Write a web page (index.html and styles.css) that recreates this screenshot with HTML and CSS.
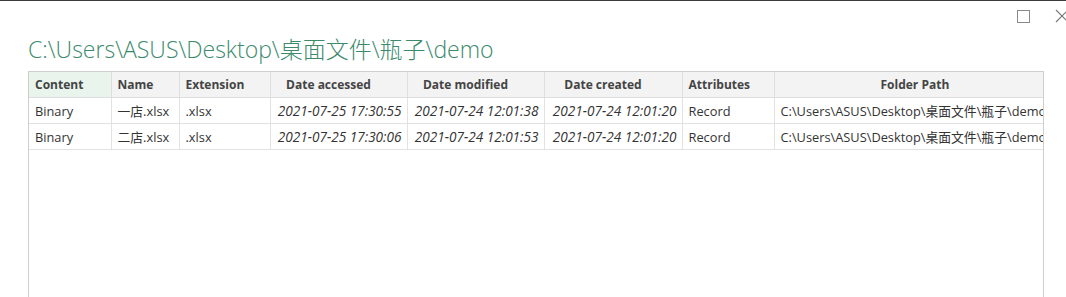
FILE: index.html
```html
<!DOCTYPE html>
<html>
<head>
  <title>demo</title>
  <meta charset="UTF-8">
  <link rel="stylesheet" href="styles.css">
</head>
<body>

  <div class="top-line"></div>

  <div class="window-buttons">
    <span class="btn-max"></span>
    <svg class="btn-close" width="14" height="14" viewBox="0 0 14 14">
      <path d="M1 1 L13 13 M13 1 L1 13" stroke="#777" stroke-width="1.1" fill="none"/>
    </svg>
  </div>

  <h1 class="path-title">C:\Users\ASUS\Desktop\桌面文件\瓶子\demo</h1>

  <div class="grid-box">
    <table class="grid">
      <colgroup>
        <col style="width:82px">
        <col style="width:68px">
        <col style="width:91px">
        <col style="width:137px">
        <col style="width:137px">
        <col style="width:138px">
        <col style="width:92px">
        <col style="width:320px">
      </colgroup>
      <thead>
        <tr>
          <th class="selected">Content</th>
          <th>Name</th>
          <th>Extension</th>
          <th class="mid">Date accessed</th>
          <th class="mid">Date modified</th>
          <th class="mid">Date created</th>
          <th>Attributes</th>
          <th class="path-head">Folder Path</th>
        </tr>
      </thead>
      <tbody>
        <tr>
          <td>Binary</td>
          <td>一店.xlsx</td>
          <td>.xlsx</td>
          <td class="date">2021-07-25 17:30:55</td>
          <td class="date">2021-07-24 12:01:38</td>
          <td class="date">2021-07-24 12:01:20</td>
          <td>Record</td>
          <td>C:\Users\ASUS\Desktop\桌面文件\瓶子\demo\</td>
        </tr>
        <tr>
          <td>Binary</td>
          <td>二店.xlsx</td>
          <td>.xlsx</td>
          <td class="date">2021-07-25 17:30:06</td>
          <td class="date">2021-07-24 12:01:53</td>
          <td class="date">2021-07-24 12:01:20</td>
          <td>Record</td>
          <td>C:\Users\ASUS\Desktop\桌面文件\瓶子\demo\</td>
        </tr>
      </tbody>
    </table>
  </div>

</body>
</html>
```

FILE: styles.css
```css
body {
  background-color: white;
  font-family: "Open Sans", "Noto Sans CJK SC", sans-serif;
  margin: 0;
  height: 297px;
  overflow: hidden;
}

.top-line {
  height: 1px;
  background-color: #3c3c3c;
}

.window-buttons {
  display: flex;
  justify-content: flex-end;
  align-items: center;
  gap: 25px;
  height: 20px;
  padding-top: 5px;
  margin-right: -3px;
}

.btn-max {
  width: 11px;
  height: 11px;
  border: 1px solid #8a8a8a;
}

.path-title {
  font-family: "Open Sans", "Noto Sans CJK SC", sans-serif;
  font-weight: 300;
  font-size: 23px;
  color: #3b8a6c;
  margin: 6px 0 0 28px;
  line-height: 34px;
  height: 39px;
}

.grid-box {
  margin-left: 28px;
  width: 1014px;
  height: 240px;
  border: 1px solid #cfcfcf;
  overflow: hidden;
}

.grid {
  border-collapse: collapse;
  table-layout: fixed;
  width: 1065px;
  font-size: 12.8px;
  color: #333;
}

.grid th {
  height: 25px;
  background-color: #f3f3f3;
  font-size: 12px;
  font-weight: bold;
  color: #444;
  text-align: left;
  padding: 0 6px;
  border-right: 1px solid #dedede;
  border-bottom: 1px solid #dedede;
  white-space: nowrap;
}

.grid th.selected {
  background-color: #e9f4ed;
}

.grid th.mid {
  text-align: center;
  padding-right: 26px;
}

.grid th.path-head {
  padding-left: 106px;
}

.grid td {
  height: 25px;
  padding: 0 6px;
  border-right: 1px solid #e2e2e2;
  border-bottom: 1px solid #e2e2e2;
  white-space: nowrap;
  overflow: hidden;
}

.grid td.date {
  font-style: italic;
  font-size: 13.6px;
  text-align: right;
  padding-right: 5px;
}
```
